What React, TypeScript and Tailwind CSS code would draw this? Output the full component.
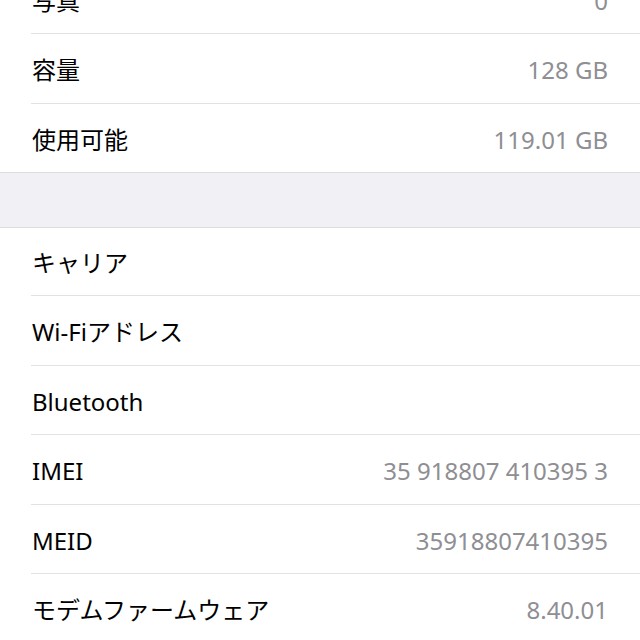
const font = { fontFamily: '"Noto Sans", "Noto Sans CJK JP", sans-serif' };

type Item = { label: string; value?: string; h: string };

const top: Item[] = [
  { label: "写真", value: "0", h: "h-[69px]" },
  { label: "容量", value: "128 GB", h: "h-[70px]" },
  { label: "使用可能", value: "119.01 GB", h: "h-[68px]" },
];

const bottom: Item[] = [
  { label: "キャリア", h: "h-[68px]" },
  { label: "Wi-Fiアドレス", h: "h-[70px]" },
  { label: "Bluetooth", h: "h-[69px]" },
  { label: "IMEI", value: "35 918807 410395 3", h: "h-[70px]" },
  { label: "MEID", value: "35918807410395", h: "h-[69px]" },
  { label: "モデムファームウェア", value: "8.40.01", h: "h-[70px]" },
];

function Row({ item, last }: { item: Item; last: boolean }) {
  return (
    <div className="pl-[31px] bg-white">
      <div
        className={
          item.h +
          " flex items-center justify-between pr-[32px] " +
          (last ? "" : "border-b border-[#e2e2e4]")
        }
      >
        <span className="pl-[1px] text-[24px] text-black pt-[3px]">{item.label}</span>
        {item.value && (
          <span className="text-[24px] text-[#8e8e93] pt-[3px]">{item.value}</span>
        )}
      </div>
    </div>
  );
}

export default function App() {
  return (
    <div className="w-[640px] h-[640px] overflow-hidden bg-white" style={font}>
      <div className="-mt-[35px]">
        <div className="border-b border-[#dcdcde]">
          {top.map((it, i) => (
            <Row key={it.label} item={it} last={i === top.length - 1} />
          ))}
        </div>
        <div className="h-[54px] bg-[#f1f1f5]" />
        <div className="border-t border-[#dcdcde]">
          {bottom.map((it) => (
            <Row key={it.label} item={it} last={false} />
          ))}
        </div>
      </div>
    </div>
  );
}
